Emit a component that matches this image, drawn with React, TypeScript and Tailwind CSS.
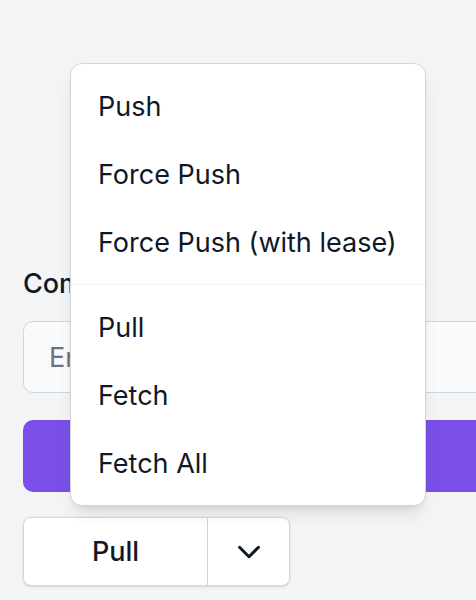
import type { FC } from "react";

// メニュー項目のグループ
const pushItems = ["Push", "Force Push", "Force Push (with lease)"];
const pullItems = ["Pull", "Fetch", "Fetch All"];

const MenuItem: FC<{ label: string }> = ({ label }) => (
	<button
		type="button"
		className="flex h-[68px] w-full items-center px-[27px] pt-[3px] text-left text-[27px] text-gray-900"
	>
		{label}
	</button>
);

const ChevronDown: FC = () => (
	<svg
		width="38"
		height="38"
		viewBox="0 0 24 24"
		fill="none"
		stroke="currentColor"
		strokeWidth="1.9"
		strokeLinecap="round"
		strokeLinejoin="round"
	>
		<path d="m6 9 6 6 6-6" />
	</svg>
);

export default function App() {
	return (
		<div
			className="relative h-[600px] w-[476px] overflow-hidden bg-gray-100"
			style={{ fontFamily: "Inter, 'Noto Sans', sans-serif" }}
		>
			<div className="flex w-[540px] flex-col pl-[23px] pt-[264px]">
				<label className="text-[27px] font-medium leading-10 text-gray-900">
					Commit Message
				</label>
				<input
					placeholder="Enter commit message"
					className="mt-[17px] h-[72px] rounded-[10px] border border-gray-300 bg-gray-50 px-[25px] text-[27px] text-gray-500 placeholder:text-gray-500"
				/>
				<button
					type="button"
					className="mt-[27px] h-[72px] rounded-[10px] bg-[#7a4fe8] text-[27px] font-medium text-white"
				>
					Commit
				</button>
				<div className="mt-[25px] flex h-[69px] w-[267px] rounded-[8px] border border-gray-300 bg-white shadow-sm">
					<button
						type="button"
						className="flex w-[184px] items-center justify-center border-r border-gray-300 pt-[2px] text-[27px] font-medium text-gray-900"
					>
						Pull
					</button>
					<button
						type="button"
						className="flex flex-1 items-center justify-center text-gray-900"
					>
						<ChevronDown />
					</button>
				</div>
			</div>

			{/* ドロップダウンメニュー */}
			<div className="absolute left-[70px] top-[63px] w-[356px] rounded-[12px] border border-gray-300 bg-white py-2 shadow-lg">
				{pushItems.map((item) => (
					<MenuItem key={item} label={item} />
				))}
				<div className="my-2 h-px bg-gray-100" />
				{pullItems.map((item) => (
					<MenuItem key={item} label={item} />
				))}
			</div>
		</div>
	);
}
